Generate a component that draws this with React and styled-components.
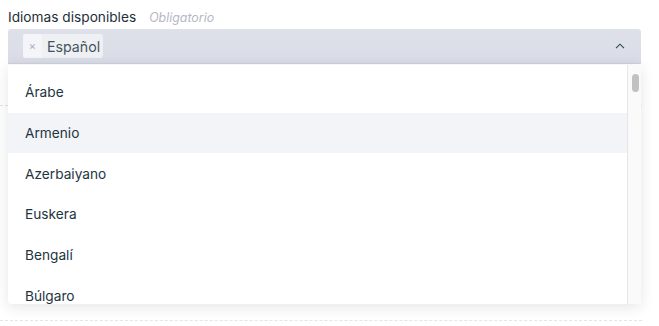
import React from 'react';
import styled, { createGlobalStyle } from 'styled-components';

const GlobalStyle = createGlobalStyle`
    body {
        margin: 0;
        background: #ffffff;
        font-family: Inter, "Noto Sans", sans-serif;
        color: #1f3640;
    }
`;

const languages = ['Árabe', 'Armenio', 'Azerbaiyano', 'Euskera', 'Bengalí', 'Búlgaro'];

const Page = styled.div`
    position: relative;
    width: 642px;
    height: 326px;
`;

const Section = styled.div`
    padding: 0 1px 0 8px;
    border-bottom: 1px dashed #e3e5ea;
    height: ${props => props.height}px;
    box-sizing: border-box;
`;

const LabelRow = styled.div`
    display: flex;
    align-items: baseline;
    gap: 13px;
    height: 29px;
    padding-top: 9px;
    box-sizing: border-box;
`;

const Label = styled.span`
    font-size: 13.7px;
    color: #1d2f38;
`;

const Hint = styled.span`
    font-size: 12.4px;
    font-style: italic;
    color: #b4b8c4;
`;

const SelectBox = styled.div`
    display: flex;
    align-items: center;
    justify-content: space-between;
    height: 35px;
    padding: 0 16px 0 15px;
    box-sizing: border-box;
    background: linear-gradient(#dfe1ea, #d9dbe6);
    border-bottom: 1px solid #cdd0dc;
    border-radius: 3px 3px 0 0;
`;

const Tag = styled.div`
    display: flex;
    align-items: center;
    height: 24px;
    border-radius: 3px;
    background: #eff0f4;
    overflow: hidden;
`;

const TagRemove = styled.span`
    display: flex;
    align-items: center;
    justify-content: center;
    width: 19px;
    height: 100%;
    background: #f4f5f8;
    font-size: 11px;
    color: #a9adb8;
`;

const TagText = styled.span`
    padding: 0 3px 0 5px;
    font-size: 14.2px;
    color: #445560;
`;

const Dropdown = styled.div`
    position: absolute;
    top: 65px;
    left: 8px;
    width: 633px;
    height: 239px;
    display: flex;
    background: #ffffff;
    border-radius: 0 0 3px 3px;
    box-shadow: 0 3px 14px rgba(30, 40, 60, 0.12);
    overflow: hidden;
`;

const List = styled.ul`
    flex: 1;
    margin: 0;
    padding: 7px 0 0;
    list-style: none;
    overflow: hidden;
`;

const Item = styled.li`
    height: 40.7px;
    display: flex;
    align-items: center;
    padding-left: 17px;
    font-size: 13.7px;
    color: #1d3540;
    background: ${props => (props.active ? '#f3f4f8' : 'transparent')};
`;

const Track = styled.div`
    width: 14px;
    background: #fafafa;
    border-left: 1px solid #e6e6e6;
    padding: 9px 3px 0 4px;
    box-sizing: border-box;
`;

const Thumb = styled.div`
    width: 7px;
    height: 18px;
    border-radius: 4px;
    background: #c1c1c1;
`;

const Chevron = () => (
    <svg width="10" height="6" viewBox="0 0 10 6">
        <polyline points="1,5.2 5,1.2 9,5.2" fill="none" stroke="#2b4450" strokeWidth="1.1" />
    </svg>
);

export default function App() {
    return (
        <>
            <GlobalStyle />
            <Page>
                <Section height={106}>
                    <LabelRow>
                        <Label>Idiomas disponibles</Label>
                        <Hint>Obligatorio</Hint>
                    </LabelRow>
                    <SelectBox>
                        <Tag>
                            <TagRemove>×</TagRemove>
                            <TagText>Español</TagText>
                        </Tag>
                        <Chevron />
                    </SelectBox>
                </Section>
                <Section height={215} />
                <Dropdown>
                    <List>
                        {languages.map((lang, i) => (
                            <Item key={lang} active={i === 1}>{lang}</Item>
                        ))}
                    </List>
                    <Track>
                        <Thumb />
                    </Track>
                </Dropdown>
            </Page>
        </>
    );
}
